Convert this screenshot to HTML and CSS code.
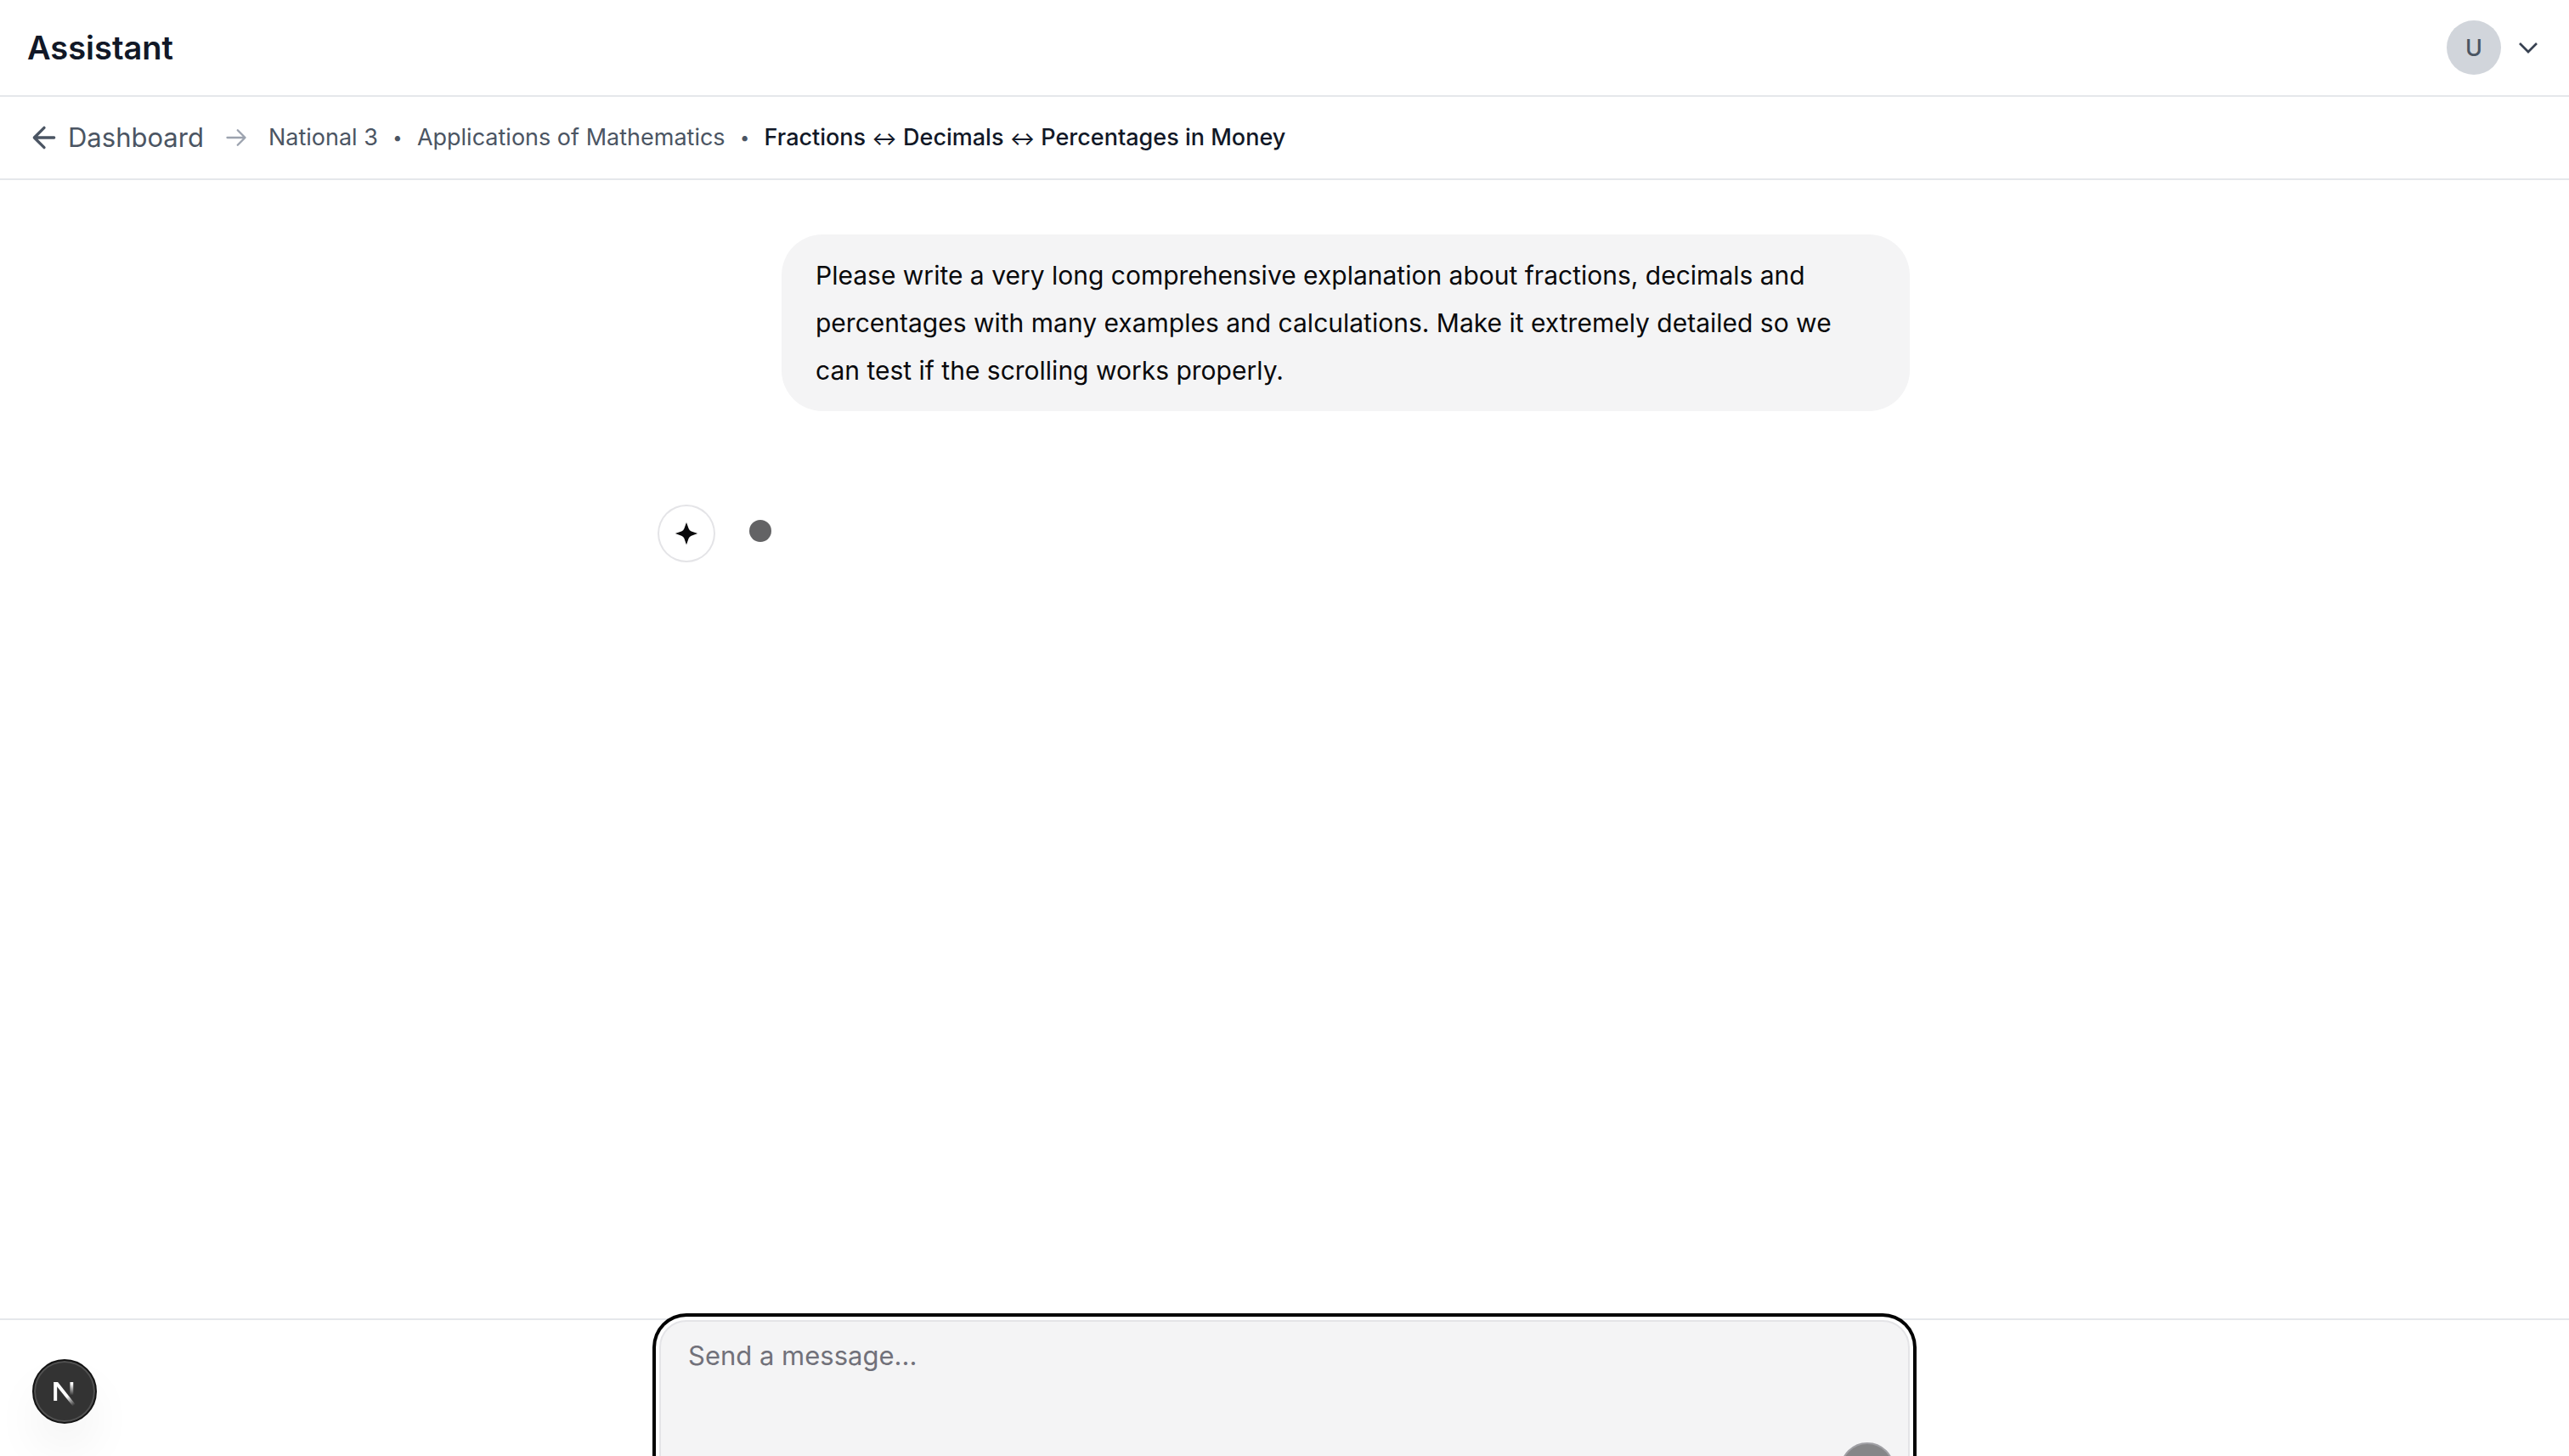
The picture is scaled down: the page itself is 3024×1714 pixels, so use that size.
FILE: index.html
```html
<!DOCTYPE html>
<html lang="en">
<head>
<meta charset="utf-8">
<meta name="viewport" content="width=device-width, initial-scale=1">
<title>Assistant</title>
<link rel="stylesheet" href="styles.css">
</head>
<body>
<div class="app">
  <header class="topbar">
    <h1 class="brand">Assistant</h1>
    <button class="account" type="button" aria-label="Account menu">
      <span class="avatar">U</span>
      <svg class="chevron" viewBox="0 0 24 24" aria-hidden="true"><path d="M19.5 8.25l-7.5 7.5-7.5-7.5"/></svg>
    </button>
  </header>
  <nav class="crumbs" aria-label="Breadcrumb">
    <a class="back" href="#dashboard">
      <svg class="back-icon" viewBox="0 0 24 24" aria-hidden="true"><path d="m12 19-7-7 7-7M19 12H5"/></svg>
      <span>Dashboard</span>
    </a>
    <svg class="sep-icon" viewBox="0 0 24 24" aria-hidden="true"><path d="M13.5 4.5L21 12l-7.5 7.5M21 12H3"/></svg>
    <div class="trail">
      <span>National 3</span>
      <span class="dot">•</span>
      <span>Applications of Mathematics</span>
      <span class="dot">•</span>
      <span class="current">Fractions <span class="swap">↔</span> Decimals <span class="swap">↔</span> Percentages in Money</span>
    </div>
  </nav>
  <main class="chat">
    <div class="column messages">
      <p class="bubble">Please write a very long comprehensive explanation about fractions, decimals and percentages with many examples and calculations. Make it extremely detailed so we can test if the scrolling works properly.</p>
      <div class="reply">
        <span class="sparkle">
          <svg viewBox="0 0 16 16" aria-hidden="true"><path d="M8 0.500L9.500 4.700Q10 6 11.300 6.500L15.500 8L11.300 9.500Q10 10 9.500 11.300L8 15.500L6.500 11.300Q6 10 4.700 9.500L0.500 8L4.700 6.500Q6 6 6.500 4.700Z"/></svg>
        </span>
        <span class="typing"></span>
      </div>
    </div>
  </main>
  <footer class="dock">
    <form class="column composer">
      <textarea class="field" aria-label="Message" placeholder="Send a message..."></textarea>
      <button class="send" type="button" disabled aria-label="Send"></button>
    </form>
  </footer>
</div>
<button class="devtools" type="button" aria-label="Open developer tools">
  <svg viewBox="0 0 40 40" aria-hidden="true">
    <defs>
      <linearGradient id="stem" x1="0" y1="15" x2="0" y2="22.500" gradientUnits="userSpaceOnUse"><stop stop-color="#fff"/><stop offset="1" stop-color="#fff" stop-opacity="0"/></linearGradient>
      <linearGradient id="slash" x1="22" y1="23" x2="26.500" y2="29" gradientUnits="userSpaceOnUse"><stop stop-color="#fff"/><stop offset="1" stop-color="#fff" stop-opacity="0"/></linearGradient>
    </defs>
    <rect x="12.900" y="13.900" width="2.200" height="12.200" fill="#fff"/>
    <path d="M12.900 13.900H15.600L27 28.400L25.300 29.600L13.600 15Z" fill="url(#slash)"/>
    <rect x="23.600" y="13.900" width="2.100" height="9" fill="url(#stem)"/>
  </svg>
</button>
</body>
</html>
```
FILE: styles.css
```css
* { box-sizing: border-box; }

body {
  margin: 0;
  height: 100vh;
  overflow: hidden;
  background: #fff;
  color: #09090b;
  font-family: Inter, "Liberation Sans", sans-serif;
  font-size: 31px;
}

button { font: inherit; border: 0; background: none; padding: 0; }
svg { display: block; }

.app {
  display: flex;
  flex-direction: column;
  height: calc(100vh + 98px);
}

.topbar {
  display: flex;
  align-items: center;
  justify-content: space-between;
  padding: 24px 32px;
  border-bottom: 2px solid #e5e7eb;
}

.brand {
  margin: 0;
  font-size: 38px;
  line-height: 56px;
  font-weight: 600;
  color: #111827;
}

.account { display: flex; align-items: center; gap: 16px; height: 64px; }

.avatar {
  display: grid;
  place-items: center;
  width: 64px;
  height: 64px;
  border-radius: 50%;
  background: #d1d5db;
  color: #4b5563;
  font-size: 27px;
  font-weight: 500;
}

.chevron { width: 32px; height: 32px; fill: none; stroke: #374151; stroke-width: 2; }

.crumbs {
  display: flex;
  align-items: center;
  gap: 24px;
  padding: 24px 32px;
  border-bottom: 2px solid #e5e7eb;
  color: #4b5563;
}

.back { display: flex; align-items: center; gap: 8px; line-height: 48px; color: inherit; text-decoration: none; }
.back-icon { width: 40px; height: 40px; fill: none; stroke: currentColor; stroke-width: 2; stroke-linecap: round; stroke-linejoin: round; }
.sep-icon { width: 28px; height: 28px; fill: none; stroke: #9ca3af; stroke-width: 2; stroke-linecap: round; stroke-linejoin: round; }
.trail { display: flex; align-items: center; gap: 16px; font-size: 27px; line-height: 40px; white-space: nowrap; }
.dot { width: 14px; font-size: 20px; text-align: center; }
.current { color: #111827; font-weight: 500; }
.swap { font-size: 22px; }

.chat { flex: 1; min-height: 0; padding-top: 64px; }

.column { width: 100%; max-width: 1536px; margin: 0 auto; padding: 0 32px; }

.messages { display: flex; flex-direction: column; gap: 112px; }

.bubble {
  align-self: flex-end;
  max-width: 1328px;
  margin: 0;
  padding: 20px 40px;
  border-radius: 48px;
  background: #f4f4f5;
  font-size: 30px;
  line-height: 56px;
}

.reply { display: flex; align-items: center; gap: 42px; }

.sparkle {
  display: grid;
  place-items: center;
  width: 64px;
  height: 64px;
  border-radius: 50%;
  box-shadow: 0 0 0 2px #e4e4e7;
}
.sparkle svg { width: 28px; height: 28px; fill: #09090b; }

.typing { width: 26px; height: 26px; margin-bottom: 6px; border-radius: 50%; background: #636365; }

.dock { border-top: 2px solid #e5e7eb; }

.composer { position: relative; padding-bottom: 32px; }

.field {
  display: block;
  width: 100%;
  height: 226px;
  padding: 16px 32px;
  border: 2px solid #e4e4e7;
  border-radius: 32px;
  background: #f4f4f5;
  color: inherit;
  font: inherit;
  line-height: 48px;
  resize: none;
  outline: none;
  box-shadow: 0 0 0 4px #fff, 0 0 0 8px #000;
}
.field::placeholder { color: #71717a; opacity: 1; }

.send {
  position: absolute;
  right: 50px;
  bottom: 50px;
  width: 64px;
  height: 64px;
  border: 2px solid #a1a1a6;
  border-radius: 50%;
  background: #868688;
}

.devtools {
  position: fixed;
  left: 38px;
  bottom: 38px;
  width: 76px;
  height: 76px;
  border: 2px solid #141414;
  border-radius: 50%;
  background: #333;
  box-shadow: inset 0 0 0 2px #515151, 0 32px 64px -16px rgba(0, 0, 0, 0.14);
}
.devtools svg { width: 72px; height: 72px; }
```
